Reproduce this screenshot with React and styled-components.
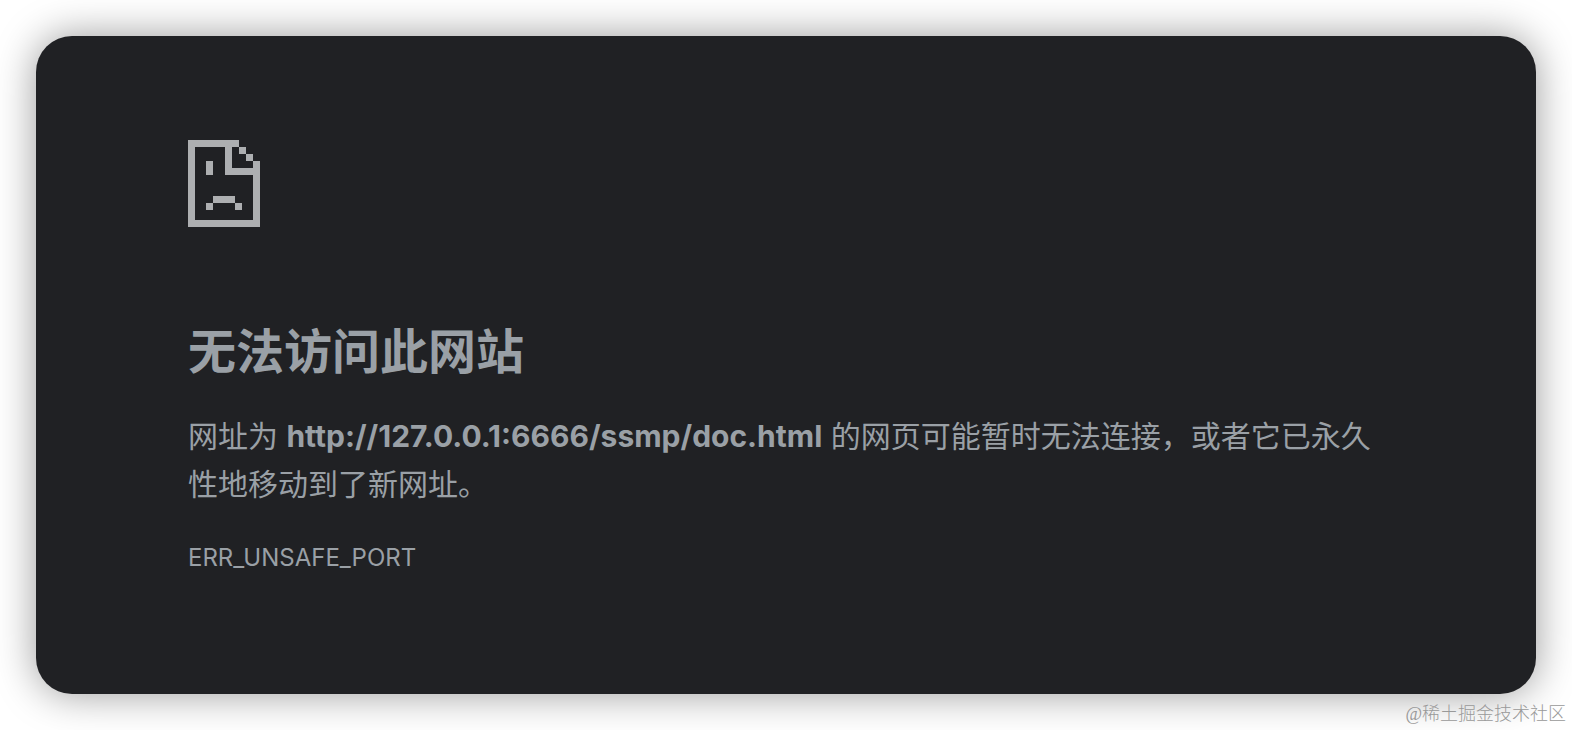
import React from 'react';
import styled, { createGlobalStyle } from 'styled-components';

const GlobalStyle = createGlobalStyle`
  * {
    box-sizing: border-box;
  }

  body {
    margin: 0;
    background: #ffffff;
    font-family: Inter, "Noto Sans CJK SC", sans-serif;
  }
`;

const Page = styled.div`
  position: relative;
  padding: 36px;
`;

const Card = styled.main`
  padding: 104px 152px 116px;
  border-radius: 36px;
  background: #202124;
  box-shadow: 0 0 40px rgba(0, 0, 0, 0.4);
  color: #9aa0a6;
`;

const SadPageIcon = styled.svg`
  display: block;
  width: 72px;
  height: 87px;
  fill: #adafb1;
`;

const Title = styled.h1`
  margin: 89px 0 0;
  font-size: 48px;
  font-weight: 700;
  line-height: 72px;
`;

const Message = styled.p`
  margin: 24px 0 0;
  font-size: 30px;
  line-height: 48px;
`;

const Address = styled.strong`
  font-weight: 700;
`;

const ErrorCode = styled.p`
  margin: 30px 0 0;
  font-size: 24px;
  line-height: 40px;
`;

const Watermark = styled.footer`
  position: absolute;
  right: 6px;
  bottom: 4px;
  color: #999999;
  font-family: "Liberation Serif", "Noto Sans CJK SC", serif;
  font-size: 18px;
  font-weight: 300;
  line-height: 24px;
`;

export default function App() {
  return (
    <>
      <GlobalStyle />
      <Page>
        <Card>
          <SadPageIcon viewBox="0 0 72 87" shapeRendering="crispEdges" aria-hidden="true">
            <path d="M0 0H51V7H58V14H65V21H72V87H0ZM7 7V80H65V35H37V7ZM44 7V28H65V21H58V14H51V7Z" fillRule="evenodd" />
            <path d="M18 21H25V35H18ZM25 56H47V63H25ZM18 63H25V70H18ZM47 63H54V70H47Z" />
          </SadPageIcon>
          <Title>无法访问此网站</Title>
          <Message>
            网址为 <Address>http://127.0.0.1:6666/ssmp/doc.html</Address> 的网页可能暂时无法连接，或者它已永久性地移动到了新网址。
          </Message>
          <ErrorCode>ERR_UNSAFE_PORT</ErrorCode>
        </Card>
        <Watermark>@稀土掘金技术社区</Watermark>
      </Page>
    </>
  );
}
